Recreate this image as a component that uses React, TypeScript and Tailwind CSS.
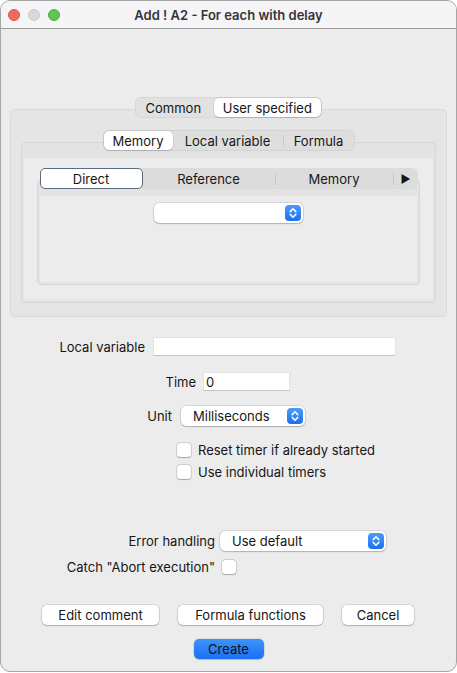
import React from "react";

const Chevrons = () => (
  <div className="w-[16px] h-[16px] rounded-[4px] bg-gradient-to-b from-[#4a9cfc] to-[#1b6ff0] flex items-center justify-center shrink-0">
    <svg width="16" height="16" viewBox="0 0 16 16">
      <path d="M5.2 6.6 L8 3.8 L10.8 6.6" stroke="white" strokeWidth="1.5" fill="none" strokeLinecap="round" strokeLinejoin="round" />
      <path d="M5.2 9.4 L8 12.2 L10.8 9.4" stroke="white" strokeWidth="1.5" fill="none" strokeLinecap="round" strokeLinejoin="round" />
    </svg>
  </div>
);

const Combo = ({ text, w }: { text?: string; w: string }) => (
  <div
    className={`${w} h-[20px] bg-white rounded-[5px] shadow-[0_0_0_0.5px_rgba(0,0,0,0.18),0_1px_1.5px_rgba(0,0,0,0.18)] flex items-center justify-between pl-[12px] pr-[2px]`}
  >
    <span className="leading-none">{text}</span>
    <Chevrons />
  </div>
);

const Check = () => (
  <div className="w-[14px] h-[14px] bg-white rounded-[3px] shadow-[0_0_0_0.5px_rgba(0,0,0,0.22),0_0.5px_1px_rgba(0,0,0,0.2)] shrink-0" />
);

const Field = ({ w, value }: { w: string; value?: string }) => (
  <div className={`${w} h-[19px] bg-white border border-[#e2e2e2] border-b-[#c4c4c4] flex items-center pl-[2px]`}>
    {value}
  </div>
);

const Btn = ({ children, w }: { children: React.ReactNode; w: string }) => (
  <div
    className={`${w} h-[20px] bg-white rounded-[5px] shadow-[0_0_0_0.5px_rgba(0,0,0,0.18),0_1px_1.5px_rgba(0,0,0,0.18)] flex items-center justify-center`}
  >
    {children}
  </div>
);

const Sep = () => <div className="w-px h-[12px] bg-[#c6c6c6]" />;

export default function App() {
  return (
    <div className="w-[457px] h-[673px] bg-white [font-family:Inter,'Noto_Sans',sans-serif] text-[13px] leading-[18px] text-[#161616]">
      <div className="h-[672px] rounded-[10px] border border-[#a6a6a6] overflow-hidden flex flex-col bg-[#ececec]">
        {/* title bar */}
        <div className="h-[28px] shrink-0 bg-[#f5f4f7] border-b border-[#9d9d9d] flex items-center px-[7px] relative">
          <div className="flex gap-[8px]">
            <div className="w-[12px] h-[12px] rounded-full bg-[#ee6a5f] border border-[#d9574c]" />
            <div className="w-[12px] h-[12px] rounded-full bg-[#d8d7db] border border-[#c9c8cc]" />
            <div className="w-[12px] h-[12px] rounded-full bg-[#61c554] border border-[#51ad45]" />
          </div>
          <div className="flex-1 text-center font-semibold text-[#353535] pr-[52px]">Add ! A2 - For each with delay</div>
        </div>

        {/* content */}
        <div className="flex-1 flex flex-col pt-[68px] px-[9px]">
          <div className="flex flex-col items-center">
            {/* tabs 1 */}
            <div className="relative z-10 h-[21px] w-[187px] rounded-[6px] bg-[#e1e1e1] border border-[#d6d6d6] flex items-center">
              <div className="w-[78px] h-full flex items-center justify-center pr-[3px]">Common</div>
              <div className="w-[108px] h-[19px] bg-white rounded-[5px] shadow-[0_0_0_0.5px_rgba(0,0,0,0.12),0_1px_1px_rgba(0,0,0,0.12)] flex items-center justify-center">
                User specified
              </div>
            </div>
            {/* L1 */}
            <div className="-mt-[9px] w-full bg-[#e5e5e5] border border-[#d9d9d9] rounded-[5px] pt-[20px] px-[10px] pb-[13px] flex flex-col items-center">
              {/* tabs 2 */}
              <div className="relative z-10 h-[21px] w-[252px] rounded-[6px] bg-[#dedede] border border-[#d3d3d3] flex items-center">
                <div className="w-[69px] h-[19px] bg-white rounded-[5px] shadow-[0_0_0_0.5px_rgba(0,0,0,0.12),0_1px_1px_rgba(0,0,0,0.12)] flex items-center justify-center">
                  Memory
                </div>
                <div className="w-[110px] h-full flex items-center justify-center">Local variable</div>
                <Sep />
                <div className="flex-1 h-full flex items-center justify-center">Formula</div>
              </div>
              {/* L2 */}
              <div className="-mt-[9px] w-full bg-[#e3e3e3] border border-[#d6d6d6] rounded-[4px] pt-[15px] px-[2px] pb-[2px]">
                <div className="bg-[#ececec] pt-[10px] px-[13px] pb-[15px] flex flex-col items-center">
                  {/* tabs 3 */}
                  <div className="relative z-10 h-[21px] w-[378px] rounded-[6px] bg-[#dcdcdc] flex items-center">
                    <div className="w-[103px] h-[21px] bg-white rounded-[5px] border border-[#5d6b7e] flex items-center justify-center">
                      Direct
                    </div>
                    <div className="w-[132px] h-full flex items-center justify-center">Reference</div>
                    <Sep />
                    <div className="w-[117px] h-full flex items-center justify-center">Memory</div>
                    <Sep />
                    <div className="flex-1 h-full flex items-center justify-center text-[11px]">▶</div>
                  </div>
                  {/* L3 */}
                  <div className="-mt-[9px] w-full bg-[#e3e3e3] border border-[#d6d6d6] rounded-[4px] pt-[15px] px-[2px] pb-[2px]">
                    <div className="h-[86px] bg-[#ececec] pt-[7px] flex flex-col items-center">
                      <Combo w="w-[149px]" />
                    </div>
                  </div>
                </div>
              </div>
            </div>
          </div>

          {/* form */}
          <div className="flex items-center mt-[20px]">
            <div className="w-[135px] text-right">Local variable</div>
            <div className="w-[8px]" />
            <Field w="w-[243px]" />
          </div>
          <div className="flex items-center mt-[16px]">
            <div className="w-[186px] text-right">Time</div>
            <div className="w-[7px]" />
            <Field w="w-[87px]" value="0" />
          </div>
          <div className="flex items-center mt-[15px]">
            <div className="w-[162px] text-right">Unit</div>
            <div className="w-[9px]" />
            <Combo w="w-[124px]" text="Milliseconds" />
          </div>
          <div className="flex flex-col mt-[13px] pl-[167px]">
            <div className="h-[22px] flex items-center gap-[7px]">
              <Check />
              <span>Reset timer if already started</span>
            </div>
            <div className="h-[22px] flex items-center gap-[7px]">
              <Check />
              <span>Use individual timers</span>
            </div>
          </div>
          <div className="flex items-center mt-[48px]">
            <div className="w-[205px] text-right">Error handling</div>
            <div className="w-[5px]" />
            <Combo w="w-[166px]" text="Use default" />
          </div>
          <div className="flex items-center mt-[7px]">
            <div className="w-[205px] text-right">Catch "Abort execution"</div>
            <div className="w-[7px]" />
            <Check />
          </div>
          <div className="flex items-center mt-[29px] pl-[32px] gap-[19px]">
            <Btn w="w-[117px]">Edit comment</Btn>
            <Btn w="w-[145px]">Formula functions</Btn>
            <Btn w="w-[72px]">Cancel</Btn>
          </div>
          <div className="flex justify-center mt-[14px]">
            <div className="w-[70px] h-[20px] rounded-[5px] bg-gradient-to-b from-[#3d94fb] to-[#1a6ff2] shadow-[0_0_0_0.5px_rgba(0,0,0,0.15),0_1px_1px_rgba(0,0,0,0.15)] flex items-center justify-center text-[#111]">
              Create
            </div>
          </div>
        </div>
      </div>
    </div>
  );
}
